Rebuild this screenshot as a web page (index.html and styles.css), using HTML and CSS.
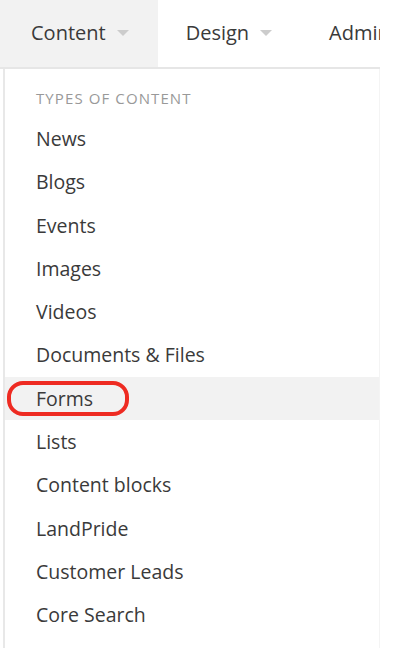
FILE: index.html
```html
<!DOCTYPE html>
<html>

<head>
  <meta charset="utf-8">
  <title>Content menu</title>
  <link rel="stylesheet" href="styles.css">
</head>

<body>
  <div class="m-nav">
    <ul class="bar">
      <li class="curr">Content <span class="caret"></span></li>
      <li>Design <span class="caret"></span></li>
      <li>Administration <span class="caret"></span></li>
    </ul>
    <div class="drop">
      <p class="hd">Types of content</p>
      <ul class="list">
        <li>News</li>
        <li>Blogs</li>
        <li>Events</li>
        <li>Images</li>
        <li>Videos</li>
        <li>Documents &amp; Files</li>
        <li class="sel"><span class="mark">Forms</span></li>
        <li>Lists</li>
        <li>Content blocks</li>
        <li>LandPride</li>
        <li>Customer Leads</li>
        <li>Core Search</li>
      </ul>
    </div>
  </div>
</body>

</html>
```

FILE: styles.css
```css
* {
  margin: 0;
  padding: 0;
}

body {
  background: #fff;
  font-family: "Open Sans", "Liberation Sans", sans-serif;
  color: #3a3a3a;
}

li {
  list-style: none;
}

.m-nav {
  width: 380px;
  overflow: hidden;
}

.m-nav .bar {
  display: flex;
  height: 67px;
  white-space: nowrap;
  border-bottom: 2px solid #e6e6e6;
}

.m-nav .bar li {
  display: flex;
  align-items: center;
  flex-shrink: 0;
  padding: 0 29px 3px 28px;
  font-size: 20px;
  color: #3a3a3a;
}

.m-nav .bar li.curr {
  padding-left: 31px;
  background: #f2f2f2;
}

.m-nav .caret {
  display: inline-block;
  margin-left: 11px;
  margin-top: 2px;
  border-left: 6px solid transparent;
  border-right: 6px solid transparent;
  border-top: 6px solid #ccc;
}

.m-nav .drop {
  margin-left: 3px;
  height: 579px;
  border-left: 2px solid #e8e8e8;
  border-right: 1px solid #f4f4f4;
}

.m-nav .hd {
  padding: 20px 0 10px 31px;
  font-size: 15px;
  letter-spacing: 1.1px;
  text-transform: uppercase;
  color: #999;
  line-height: 18px;
}

.m-nav .list li {
  height: 43.3px;
  line-height: 43.3px;
  padding-left: 31px;
  font-size: 19.5px;
  color: #3a3a3a;
}

.m-nav .list li.sel {
  background: #f2f2f2;
}

.m-nav .mark {
  position: relative;
}

.m-nav .mark::before {
  content: "";
  position: absolute;
  left: -29px;
  right: -36px;
  top: -4px;
  bottom: -4px;
  border: 4px solid #ee2b22;
  border-radius: 16px;
}
```
